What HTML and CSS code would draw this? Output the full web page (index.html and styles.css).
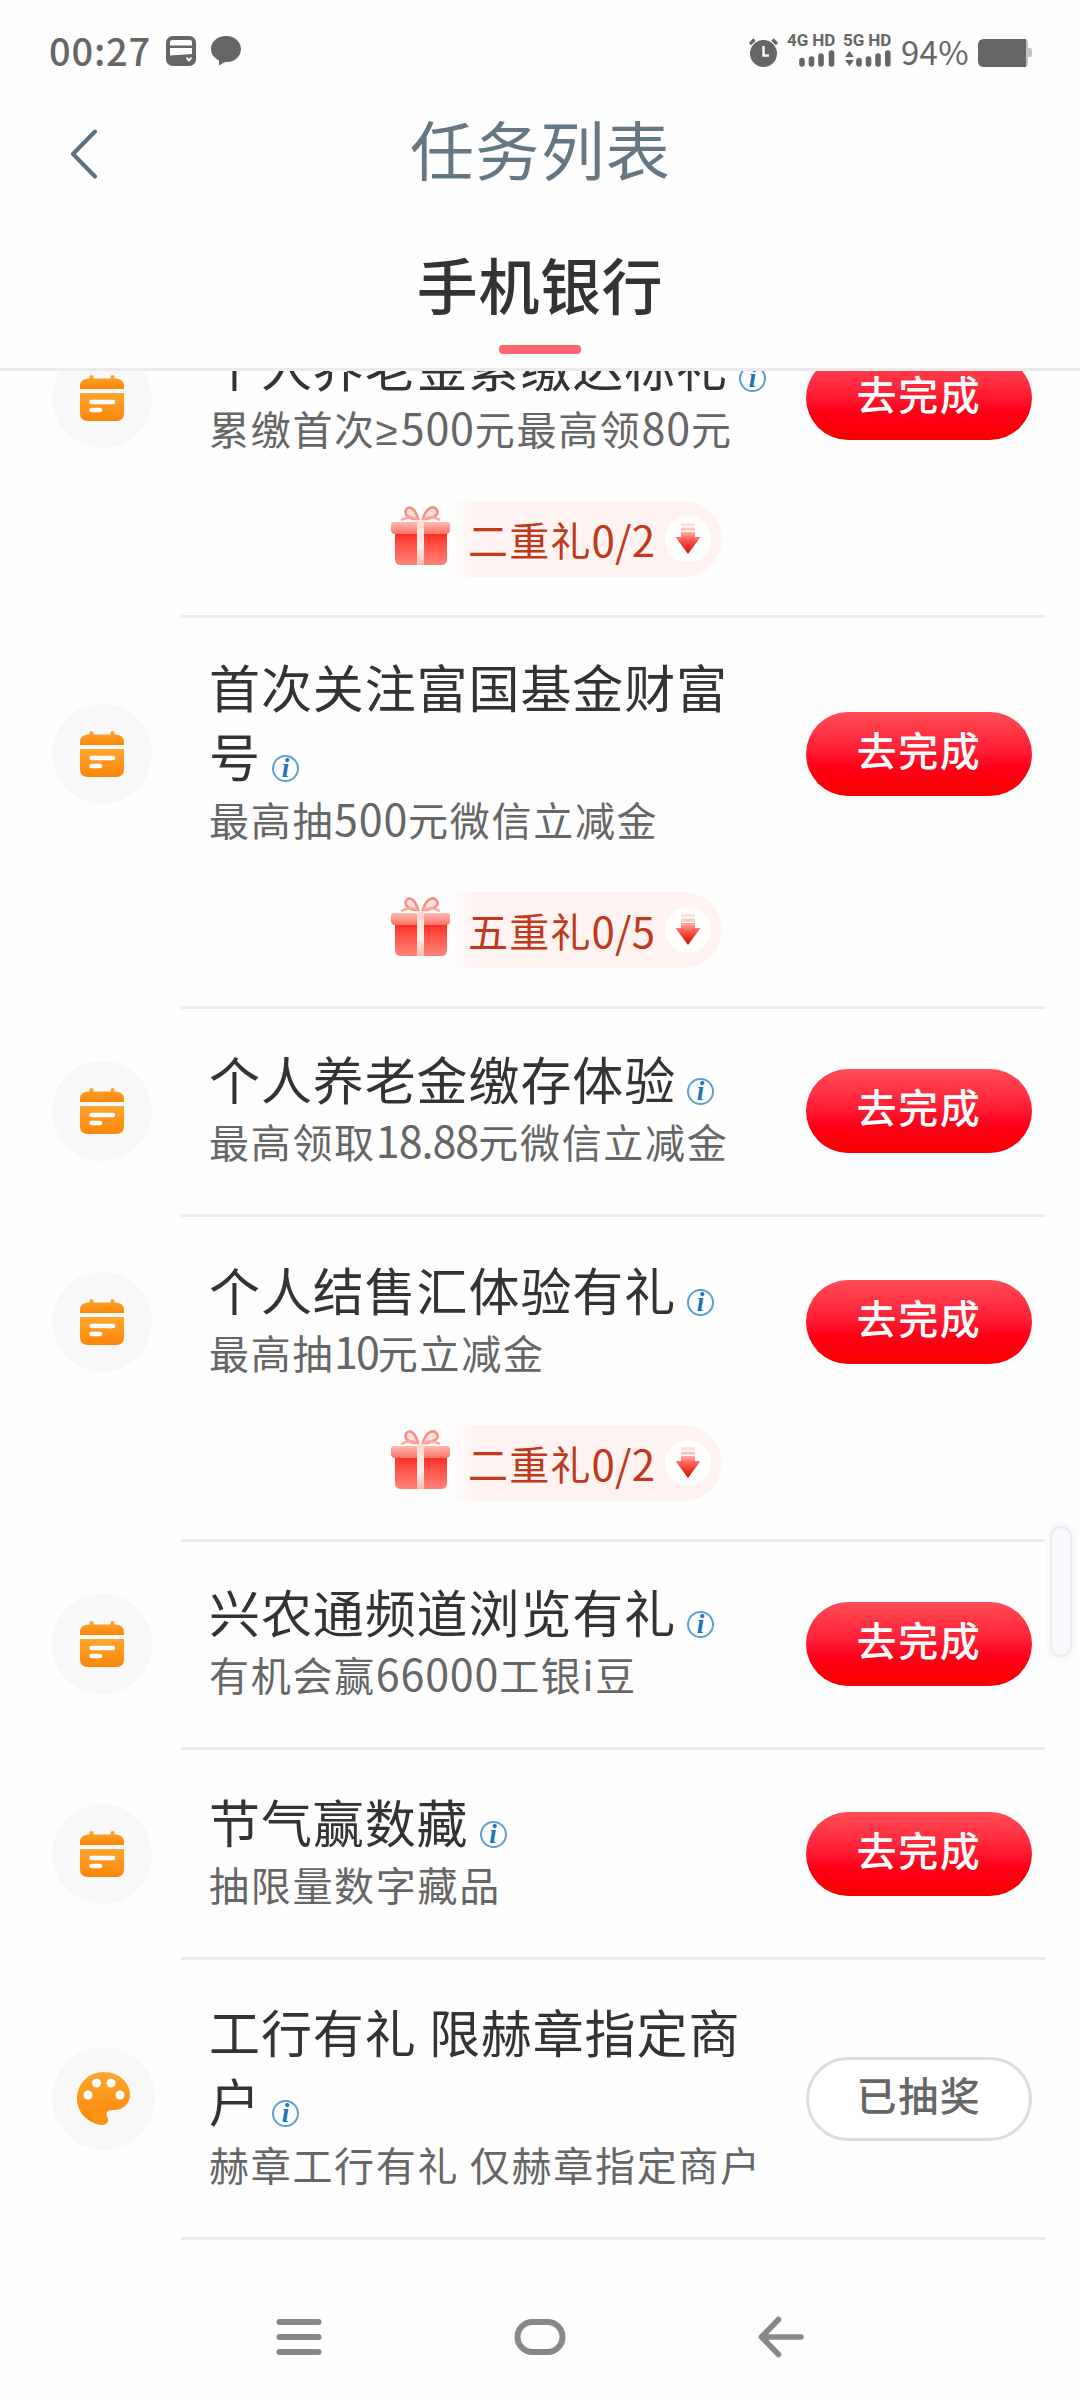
FILE: index.html
```html
<!DOCTYPE html>
<html lang="zh-CN">
<head>
<meta charset="utf-8">
<title>任务列表</title>
<link rel="stylesheet" href="styles.css">
</head>
<body>
<svg width="0" height="0" class="defs">
  <defs>
    <linearGradient id="orange" x1="0" y1="0" x2="0" y2="1"><stop offset="0" stop-color="#ffa62f"/><stop offset="1" stop-color="#fb8608"/></linearGradient>
    <linearGradient id="lid" x1="0" y1="0" x2="0" y2="1"><stop offset="0" stop-color="#ffb9b0"/><stop offset="1" stop-color="#fc7468"/></linearGradient>
    <linearGradient id="box" x1="0" y1="0" x2="0" y2="1"><stop offset="0" stop-color="#f92a22"/><stop offset=".3" stop-color="#ff4b40"/><stop offset="1" stop-color="#ff8378"/></linearGradient>
    <linearGradient id="ribbon" x1="0" y1="0" x2="0" y2="1"><stop offset="0" stop-color="#ffd8d0"/><stop offset=".6" stop-color="#fff1ee"/><stop offset="1" stop-color="#ffb8ae"/></linearGradient>
    <linearGradient id="arrow" gradientUnits="userSpaceOnUse" x1="0" y1="6" x2="0" y2="37"><stop offset="0" stop-color="#fff0ed"/><stop offset=".35" stop-color="#ffa79b"/><stop offset=".6" stop-color="#fb5546"/><stop offset="1" stop-color="#d81200"/></linearGradient>
    <symbol id="calendar" viewBox="0 0 44 46">
      <path d="M11.500 0q2 0 2 2v1.500h17V2q0-2 2-2t2 2v1.500h1.500q8 .5 8 7.500v3H0v-3q0-7 8-7.500h1.500V2q0-2 2-2z" fill="url(#orange)"/>
      <path d="M0 18h44V38q0 8-8 8H8q-8 0-8-8z" fill="url(#orange)"/>
      <path d="M11.500 27h21.500M11.500 35h8.500" stroke="#fff" stroke-width="4.400" stroke-linecap="round"/>
    </symbol>
    <symbol id="palette" viewBox="0 0 54 54">
      <path d="M27 0C42 0 53 11 53 22 53 32 46 38 37 38 32 38 29 39 29.500 43 30 46 32 47 30 51 28 54 21 53 17 51 7 47 0 38 0 27 0 12 11 0 27 0z" fill="url(#orange)"/>
      <path d="M9 41q7-3 19-1 1 4 3 7 0 5-6 5-9 0-16-11z" fill="#ff9413"/>
      <circle cx="11" cy="23" r="4.500" fill="#fff"/><circle cx="19.500" cy="11" r="4.500" fill="#fff"/><circle cx="34" cy="11" r="4.500" fill="#fff"/><circle cx="43" cy="23" r="4.500" fill="#fff"/>
    </symbol>
    <symbol id="gift" viewBox="0 0 59 60">
      <path d="M27 13C24 1 17-1 15 4S18 13 27 13zM32 13C35 1 43-1 46 4S41 13 32 13z" fill="#ffe1db" stroke="#fa8e83" stroke-width="2.600"/>
      <path d="M10 14q9-5 17-1M32 13q9-4 17 1" fill="none" stroke="#fda79d" stroke-width="2.500"/>
      <path d="M4 27h52v26q0 6-6 6H10q-6 0-6-6z" fill="url(#box)"/>
      <path d="M3 16h53q3 0 3 3v5q0 4-4 4H4q-4 0-4-4v-5q0-3 3-3z" fill="url(#lid)"/>
      <path d="M26 15h7v44h-7z" fill="url(#ribbon)"/>
    </symbol>
    <symbol id="down" viewBox="0 0 46 46">
      <circle cx="23" cy="23" r="23" fill="#fff"/>
      <path d="M16 7h14v3H16zM16 11.500h14v3H16zM16 16h14v5h5.500L23 38 10.500 21H16z" fill="url(#arrow)"/>
    </symbol>
  </defs>
</svg>

<div class="screen">
  <header class="header">
    <div class="status">
      <span class="clock">00:27</span>
      <svg class="card" width="30" height="30" viewBox="0 0 30 30"><rect width="30" height="30" rx="6.500" fill="#666"/><path d="M6 4h18q2 0 2 2v3.500H4V6q0-2 2-2zM4 12h22v6L4 19.500z" fill="#fff"/><path d="M20.500 21.500l2.500 3 2.500-3" fill="none" stroke="#fff" stroke-width="1.800"/></svg>
      <svg class="bubble" width="30" height="30" viewBox="0 0 30 30"><path d="M15 0C24 0 30 6 30 13S24 26.500 15 26q-2 0-7 3.500V24.500C3 22 0 18 0 13 0 6 6 0 15 0z" fill="#666"/></svg>
      <svg class="alarm" width="29" height="30" viewBox="0 0 29 30"><circle cx="14.500" cy="16.500" r="13.500" fill="#666"/><path d="M1 7l4.500-4.500M28 7l-4.500-4.500" stroke="#666" stroke-width="3.200"/><path d="M14.500 9v9.500H20" fill="none" stroke="#fff" stroke-width="2.400"/></svg>
      <div class="signal">
        <span class="net">4G HD</span>
        <svg width="48" height="17" viewBox="0 0 48 17"><path d="M15 10.500v3.500M24.500 9v5M34 6v8M44.500 3v11" stroke="#666" stroke-width="5.600" stroke-linecap="round"/></svg>
      </div>
      <div class="signal second">
        <span class="net">5G HD</span>
        <svg width="48" height="17" viewBox="0 0 48 17"><path d="M2 7l4.500-6L11 7zM2 10l4.500 6L11 10z" fill="#666"/><path d="M16 10.500v3.500M25.500 9v5M35 6v8M44.800 3v11" stroke="#666" stroke-width="5.600" stroke-linecap="round"/></svg>
      </div>
      <span class="percent">94%</span>
      <svg class="battery" width="54" height="28" viewBox="0 0 54 28"><path d="M43 0h3q4 0 4 4v5h2q2 0 2 2v5q0 2-2 2h-2v6q0 4-4 4h-3z" fill="#c4c4c4"/><path d="M6 0h42v28H6q-6 0-6-6V6q0-6 6-6z" fill="#666"/></svg>
    </div>
    <div class="navbar">
      <svg class="back" width="28" height="50" viewBox="0 0 28 50"><path d="M25 2.500L3 25l22 22.500" fill="none" stroke="#5a7185" stroke-width="4" stroke-linecap="round" stroke-linejoin="round"/></svg>
      <h1 class="page-title">任务列表</h1>
    </div>
    <div class="tabs"><div class="tab">手机银行</div></div>
  </header>

  <main class="list">
    <section class="task">
      <div class="task-main">
        <div class="avatar"><svg width="44" height="46"><use href="#calendar"/></svg></div>
        <div class="text"><div class="name">个人养老金累缴达标礼<i class="info">i</i></div><div class="desc">累缴首次<span class="sign">≥</span><span class="num">500</span>元最高领<span class="num">80</span>元</div></div>
        <div class="btn">去完成</div>
      </div>
      <div class="gift"><svg width="59" height="60"><use href="#gift"/></svg><div class="pill">二重礼<span class="num">0/2</span><svg width="46" height="46"><use href="#down"/></svg></div></div>
    </section>
    <section class="task">
      <div class="task-main tall">
        <div class="avatar"><svg width="44" height="46"><use href="#calendar"/></svg></div>
        <div class="text"><div class="name">首次关注富国基金财富<br>号<i class="info">i</i></div><div class="desc">最高抽<span class="num">500</span>元微信立减金</div></div>
        <div class="btn">去完成</div>
      </div>
      <div class="gift"><svg width="59" height="60"><use href="#gift"/></svg><div class="pill">五重礼<span class="num">0/5</span><svg width="46" height="46"><use href="#down"/></svg></div></div>
    </section>
    <section class="task">
      <div class="task-main">
        <div class="avatar"><svg width="44" height="46"><use href="#calendar"/></svg></div>
        <div class="text"><div class="name">个人养老金缴存体验<i class="info">i</i></div><div class="desc">最高领取<span class="num tight">18.88</span>元微信立减金</div></div>
        <div class="btn">去完成</div>
      </div>
    </section>
    <section class="task">
      <div class="task-main">
        <div class="avatar"><svg width="44" height="46"><use href="#calendar"/></svg></div>
        <div class="text"><div class="name">个人结售汇体验有礼<i class="info">i</i></div><div class="desc">最高抽<span class="num tighter">10</span>元立减金</div></div>
        <div class="btn">去完成</div>
      </div>
      <div class="gift"><svg width="59" height="60"><use href="#gift"/></svg><div class="pill">二重礼<span class="num">0/2</span><svg width="46" height="46"><use href="#down"/></svg></div></div>
    </section>
    <section class="task">
      <div class="task-main">
        <div class="avatar"><svg width="44" height="46"><use href="#calendar"/></svg></div>
        <div class="text"><div class="name">兴农通频道浏览有礼<i class="info">i</i></div><div class="desc">有机会赢<span class="num">66000</span>工银i豆</div></div>
        <div class="btn">去完成</div>
      </div>
    </section>
    <section class="task">
      <div class="task-main">
        <div class="avatar"><svg width="44" height="46"><use href="#calendar"/></svg></div>
        <div class="text"><div class="name">节气赢数藏<i class="info">i</i></div><div class="desc">抽限量数字藏品</div></div>
        <div class="btn">去完成</div>
      </div>
    </section>
    <section class="task">
      <div class="task-main tall">
        <div class="avatar large"><svg width="54" height="54"><use href="#palette"/></svg></div>
        <div class="text"><div class="name">工行有礼 限赫章指定商<br>户<i class="info">i</i></div><div class="desc">赫章工行有礼 仅赫章指定商户</div></div>
        <div class="btn done">已抽奖</div>
      </div>
    </section>
  </main>

  <nav class="sysnav">
    <svg width="46" height="42" viewBox="0 0 46 42"><path d="M3.500 6h39M3.500 21h39M3.500 36h39" stroke="#888" stroke-width="6" stroke-linecap="round"/></svg>
    <svg width="52" height="42" viewBox="0 0 52 42"><rect x="3.500" y="6" width="45" height="30" rx="15" fill="none" stroke="#888" stroke-width="6"/></svg>
    <svg width="46" height="42" viewBox="0 0 46 42"><path d="M43 21H4M20.500 3.500L3.500 21l17 17.500" fill="none" stroke="#888" stroke-width="5.600" stroke-linecap="round" stroke-linejoin="round"/></svg>
  </nav>
  <div class="thumb"></div>
</div>
</body>
</html>
```
FILE: styles.css
```css
* { box-sizing: border-box; }
body {
  margin: 0;
  background: #fefefe;
  color: #333;
  font-family: "Noto Sans CJK SC", "Noto Sans", sans-serif;
}
svg { display: block; flex: none; }
.defs { position: absolute; }
.screen {
  position: relative;
  width: 1080px;
  height: 2400px;
  display: flex;
  flex-direction: column;
  overflow: hidden;
}

/* Header */
.header { height: 371px; flex: none; border-bottom: 3px solid #ebebeb; }
.status {
  height: 84px;
  padding: 0 48px 0 49px;
  display: flex;
  align-items: flex-start;
  color: #666;
}
.clock {
  width: 117px;
  padding-top: 30px;
  font-size: 38px;
  line-height: 40px;
  font-weight: 500;
  letter-spacing: 0.8px;
  white-space: nowrap;
}
.card { margin-top: 36px; }
.bubble { margin: 36px 0 0 15px; }
.alarm { margin: 37px 0 0 auto; }
.signal {
  width: 48px;
  margin: 33px 0 0 9px;
  display: flex;
  flex-direction: column;
  gap: 3px;
}
.net {
  font: 700 17px/14px Roboto, sans-serif;
  letter-spacing: -0.1px;
  white-space: nowrap;
}
.second { margin-left: 8px; }
.percent {
  width: 86px;
  padding: 31px 0 0 10px;
  font-size: 33px;
  line-height: 40px;
  letter-spacing: 0.3px;
  white-space: nowrap;
}
.battery { margin: 39px 0 0 1px; }
.navbar {
  height: 134px;
  padding: 0 71px;
  display: flex;
  align-items: center;
}
.page-title {
  flex: 1;
  margin: -8px 26px 0 0;
  text-align: center;
  font-size: 64px;
  line-height: 90px;
  font-weight: 400;
  letter-spacing: 1.2px;
  color: #667784;
}
.back { margin: 5px 0 0 -1px; }
.tabs {
  height: 136px;
  display: flex;
  justify-content: center;
}
.tab {
  display: flex;
  flex-direction: column;
  justify-content: space-between;
  align-items: center;
  padding-top: 22px;
  font-size: 61px;
  line-height: 88px;
  font-weight: 500;
  letter-spacing: 0.6px;
}
.tab::after {
  content: "";
  width: 82px;
  height: 9px;
  border-radius: 4px;
  background: #ff666f;
}

/* Task list */
.list { flex: none; height: 1869px; overflow: hidden; }
.task { position: relative; padding: 36px 0 41px; }
.task::after {
  content: "";
  position: absolute;
  left: 181px;
  right: 35px;
  bottom: 0;
  height: 3px;
  background: #ececec;
}
.task:nth-child(1) { margin-top: -39px; padding-top: 0; }
.task:nth-child(2) { padding-top: 35px; }
.task:nth-child(4) { padding-top: 39px; }
.task:nth-child(6), .task:nth-child(7) { padding-top: 38px; }
.task-main {
  height: 131px;
  padding: 0 48px 0 52px;
  display: flex;
  align-items: center;
}
.tall { height: 201px; }
.avatar {
  width: 100px;
  height: 100px;
  border-radius: 50%;
  background: #f8f8f8;
  display: flex;
  align-items: center;
  justify-content: center;
}
.large { width: 103px; height: 103px; margin-right: -3px; }
.text { flex: 1; padding: 0 0 9px 57px; white-space: nowrap; }
.name {
  height: 69px;
  margin-bottom: 1px;
  font-size: 51px;
  line-height: 69px;
  letter-spacing: 0.9px;
}
.tall .name { height: 139px; }
.info {
  display: inline-block;
  width: 27px;
  height: 27px;
  margin-left: 11px;
  border: 2px solid #5a9fd8;
  border-radius: 50%;
  vertical-align: 0;
  text-align: center;
  font: italic 700 27px/23px "Liberation Serif", serif;
  letter-spacing: 0;
  color: #1a74c4;
}
.desc {
  height: 55px;
  font-size: 40px;
  line-height: 55px;
  letter-spacing: 1.7px;
  color: #666;
}
.num { font-size: 43px; line-height: 1; letter-spacing: 0.8px; }
.tight { letter-spacing: -1px; }
.tighter { letter-spacing: -2px; }
.sign { font-family: "Noto Sans", sans-serif; line-height: 1; letter-spacing: 3px; }
.btn {
  width: 226px;
  height: 84px;
  border-radius: 42px;
  background: linear-gradient(#ff4d57, #ff1c33 48%, #ff0018 65%, #f70000);
  color: #fff;
  font-size: 40px;
  line-height: 74px;
  font-weight: 500;
  letter-spacing: 1.7px;
  text-align: center;
}
.done {
  border: 3px solid #ddd;
  background: #fff;
  color: #666;
  line-height: 68px;
}
.gift {
  margin: 38px 0 0 391px;
  height: 76px;
  display: flex;
  align-items: center;
}
.gift > svg { margin-top: -6px; }
.pill {
  width: 272px;
  height: 76px;
  padding: 0 11px 0 18px;
  border-radius: 0 38px 38px 0;
  background: linear-gradient(90deg, #fefefe, #fff3f2 9%, #fff3f2);
  display: flex;
  align-items: center;
  font-size: 40px;
  letter-spacing: 1.2px;
  color: #c0391b;
  white-space: nowrap;
}
.pill .num { font-size: 42px; letter-spacing: 0.2px; }
.pill svg { margin-left: auto; }

/* System bars */
.sysnav {
  flex: 1;
  padding: 34px 276px 0;
  display: flex;
  align-items: center;
  justify-content: space-between;
}
.thumb {
  position: absolute;
  left: 1050px;
  top: 1526px;
  width: 22px;
  height: 131px;
  border: 2px solid #ebebf2;
  border-radius: 11px;
  background: #f8f8fd;
  box-shadow: 0 0 5px 2px #f4f4f7;
}
```
